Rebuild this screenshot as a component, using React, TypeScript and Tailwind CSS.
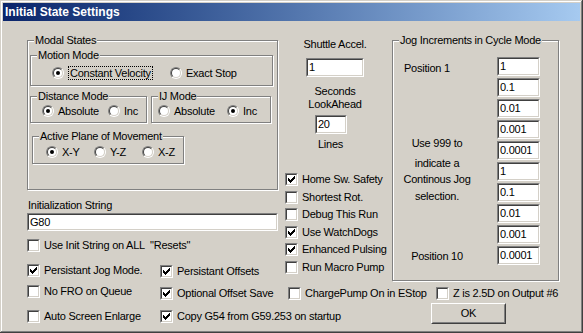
import React from "react"

type Kids = { children?: React.ReactNode; className?: string }

function Radio({ on }: { on?: boolean }) {
  return (
    <span className="flex h-[12px] w-[12px] shrink-0 rounded-full border border-t-[#808080] border-l-[#808080] border-r-white border-b-white">
      <span className="flex flex-1 items-center justify-center rounded-full border border-t-[#404040] border-l-[#404040] border-r-[#d4d0c8] border-b-[#d4d0c8] bg-white">
        {on && <span className="h-[4px] w-[4px] rounded-full bg-black" />}
      </span>
    </span>
  )
}

// win2k style 7x7 tick, each column 3px tall
const tick = [2, 3, 4, 3, 2, 1, 0]

function Check({ on }: { on?: boolean }) {
  return (
    <span className="flex h-[13px] w-[13px] shrink-0 border border-t-[#808080] border-l-[#808080] border-r-white border-b-white">
      <span className="flex flex-1 items-center justify-center border border-t-[#404040] border-l-[#404040] border-r-[#d4d0c8] border-b-[#d4d0c8] bg-white">
        {on && (
          <svg width="7" height="7" viewBox="0 0 7 7" shapeRendering="crispEdges">
            {tick.map((y, x) => (
              <rect key={x} x={x} y={y} width="1" height="3" fill="#000" />
            ))}
          </svg>
        )}
      </span>
    </span>
  )
}

function Field({ value, className = "" }: { value: string; className?: string }) {
  return (
    <div className={`flex shrink-0 border border-t-[#808080] border-l-[#808080] border-r-white border-b-white ${className}`}>
      <div className="flex flex-1 items-center border border-t-[#404040] border-l-[#404040] border-r-[#d4d0c8] border-b-[#d4d0c8] bg-white pl-[1px]">
        {value}
      </div>
    </div>
  )
}

// etched group box, caption sits on the top edge
function Group({ label, className = "", children }: Kids & { label: string }) {
  return (
    <div className={`relative shrink-0 border border-[#808080] pt-[6px] shadow-[1px_1px_0_#fff,inset_1px_1px_0_#fff] ${className}`}>
      <span className="absolute -top-[7px] left-[6px] whitespace-nowrap bg-[#d4d0c8] px-[1px] leading-[13px]">{label}</span>
      {children}
    </div>
  )
}

function Opt({ on, label, className = "" }: { on?: boolean; label: string; className?: string }) {
  return (
    <div className={`flex shrink-0 items-center gap-[4px] ${className}`}>
      <Radio on={on} />
      <span>{label}</span>
    </div>
  )
}

function Box({ on, label, className = "" }: { on?: boolean; label: string; className?: string }) {
  return (
    <div className={`flex h-[16px] shrink-0 items-center gap-[4px] whitespace-pre ${className}`}>
      <Check on={on} />
      <span>{label}</span>
    </div>
  )
}

const jog = ["1", "0.1", "0.01", "0.001", "0.0001", "1", "0.1", "0.01", "0.001", "0.0001"]

export default function App() {
  return (
    <div className="h-[333px] w-[583px] overflow-hidden bg-[#d4d0c8] p-[3px] font-['Liberation_Sans',Arial,sans-serif] text-[11px] leading-[13px] tracking-[-0.25px] text-black shadow-[inset_-1px_-1px_0_#404040,inset_1px_1px_0_#d4d0c8,inset_-2px_-2px_0_#808080,inset_2px_2px_0_#fff]">
      <div className="flex h-[18px] items-center bg-linear-to-r from-[#0a246a] to-[#a6caf0] pl-[2px] text-[12px] font-bold tracking-normal text-white">
        Initial State Settings
      </div>

      <div className="flex pl-[24px]">
        {/* left column */}
        <div className="flex w-[251px] shrink-0 flex-col">
          <Group label="Modal States" className="mt-[19px] w-[251px]">
            <div className="flex flex-col pb-[25px] pl-[2px] pr-[4px]">
              <Group label="Motion Mode" className="mt-[8px] w-[243px]">
                <div className="mb-[4px] mt-[3px] flex h-[16px] items-center pl-[21px]">
                  <div className="flex w-[118px] shrink-0 items-center gap-[4px]">
                    <Radio on />
                    <span className="border border-dotted border-black px-[1px] leading-[12px]">Constant Velocity</span>
                  </div>
                  <Opt label="Exact Stop" />
                </div>
              </Group>
              <div className="mt-[10px] flex gap-[4px]">
                <Group label="Distance Mode" className="w-[117px]">
                  <div className="mb-[3px] flex h-[16px] items-center pl-[11px]">
                    <Opt on label="Absolute" className="w-[66px]" />
                    <Opt label="Inc" />
                  </div>
                </Group>
                <Group label="IJ Mode" className="w-[120px]">
                  <div className="mb-[3px] flex h-[16px] items-center pl-[6px]">
                    <Opt label="Absolute" className="w-[69px]" />
                    <Opt on label="Inc" />
                  </div>
                </Group>
              </div>
              <Group label="Active Plane of Movement" className="ml-[2px] mt-[13px] w-[152px]">
                <div className="mb-[3px] mt-[1px] flex h-[16px] items-center pl-[13px]">
                  <Opt on label="X-Y" className="w-[48px]" />
                  <Opt label="Y-Z" className="w-[48px]" />
                  <Opt label="X-Z" />
                </div>
              </Group>
            </div>
          </Group>

          <div className="mt-[9px] pl-[1px]">Initialization String</div>
          <Field value="G80" className="mt-[1px] h-[18px] w-[251px]" />
          <Box label={'Use Init String on ALL  "Resets"'} className="mt-[6px]" />
          <div className="mt-[9px] flex items-start">
            <Box on label="Persistant Jog Mode." className="w-[133px]" />
            <Box on label="Persistant Offsets" className="mt-[1px]" />
          </div>
          <div className="mt-[4px] flex items-start">
            <Box label="No FRO on Queue" className="w-[133px]" />
            <Box on label="Optional Offset Save" className="mt-[2px]" />
          </div>
          <div className="mt-[7px] flex items-start">
            <Box label="Auto Screen Enlarge" className="w-[133px]" />
            <Box on label="Copy G54 from G59.253 on startup" />
          </div>
        </div>

        {/* right area */}
        <div className="flex flex-col">
          <div className="flex">
            <div className="flex w-[114px] shrink-0 flex-col items-center">
              <div className="mt-[17px]">Shuttle Accel.</div>
              <Field value="1" className="mt-[7px] h-[19px] w-[58px]" />
              <div className="mt-[8px]">Seconds</div>
              <div>LookAhead</div>
              <Field value="20" className="ml-[37px] mt-[4px] h-[19px] w-[32px] self-start" />
              <div className="mr-[9px] mt-[4px]">Lines</div>
              <div className="ml-[7px] mt-[20px] flex flex-col self-start">
                <Box on label="Home Sw. Safety" className="h-[17.5px]" />
                <Box label="Shortest Rot." className="h-[17.5px]" />
                <Box label="Debug This Run" className="h-[17.5px]" />
                <Box on label="Use WatchDogs" className="h-[17.5px]" />
                <Box on label="Enhanced Pulsing" className="h-[17.5px]" />
                <Box label="Run Macro Pump" className="h-[17.5px]" />
              </div>
            </div>

            <Group label="Jog Increments in Cycle Mode" className="mt-[19px] w-[167px]">
              <div className="flex">
                <div className="flex w-[104px] shrink-0 flex-col pr-[16px] text-center">
                  <div className="mt-[15px] pl-[11px] text-left">Position 1</div>
                  <div className="mt-[62px]">Use 999 to</div>
                  <div className="mt-[7px]">indicate a</div>
                  <div className="mt-[3px]">Continous Jog</div>
                  <div className="mt-[4px]">selection.</div>
                  <div className="mt-[47px]">Position 10</div>
                </div>
                <div className="flex flex-col gap-[2px] pb-[15px] pt-[10px]">
                  {jog.map((v, i) => (
                    <Field key={i} value={v} className="h-[19px] w-[43px]" />
                  ))}
                </div>
              </div>
            </Group>
          </div>

          <div className="mt-[4px] flex pl-[10px]">
            <Box label="ChargePump On in EStop" className="w-[148px]" />
            <Box label="Z is 2.5D on Output #6" />
          </div>

          <div className="ml-[153px] mt-[2px] flex h-[21px] w-[75px] border border-t-white border-l-white border-r-[#404040] border-b-[#404040]">
            <div className="flex flex-1 items-center justify-center border border-t-[#d4d0c8] border-l-[#d4d0c8] border-r-[#808080] border-b-[#808080]">
              OK
            </div>
          </div>
        </div>
      </div>
    </div>
  )
}
